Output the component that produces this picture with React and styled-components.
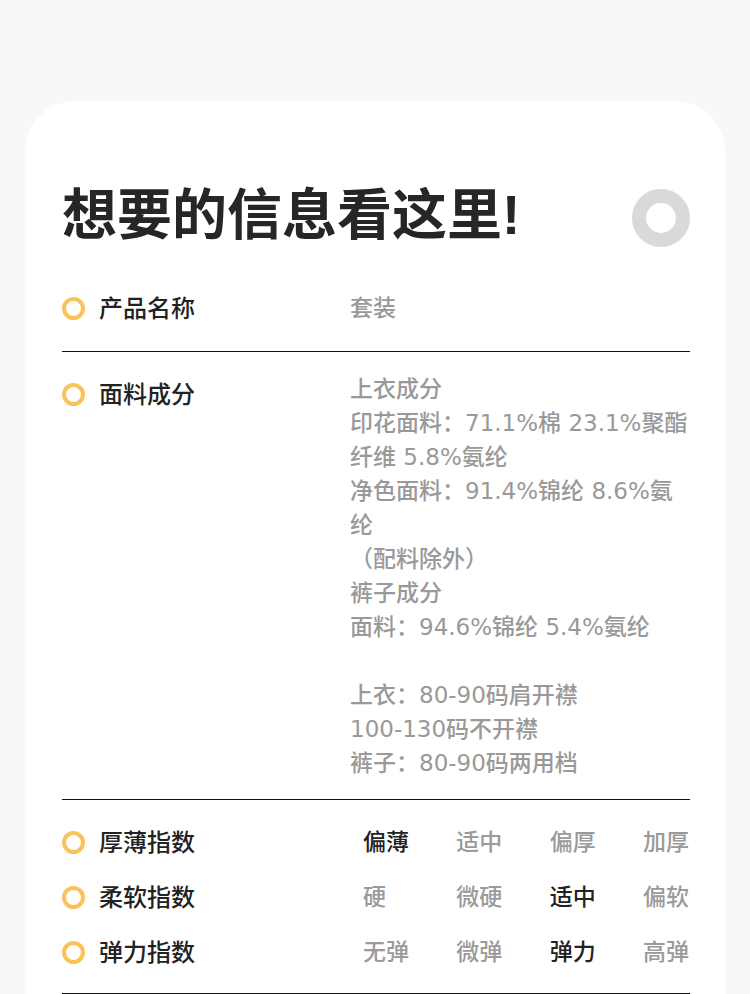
import React from 'react';
import styled, { createGlobalStyle } from 'styled-components';

const Global = createGlobalStyle`
  body {
    margin: 0;
    background: #f8f8f8;
    font-family: "Liberation Sans", "Noto Sans CJK SC", sans-serif;
  }
`

const Page = styled.div`
  padding: 101px 25px 0;
`

const Card = styled.section`
  background: #fff;
  border-radius: 50px 50px 0 0;
  padding: 80px 35px 0 37px;
  min-height: 900px;
`

const Header = styled.div`
  display: flex;
  align-items: center;
  justify-content: space-between;
  height: 74px;
  margin-bottom: 36px;
`

const Title = styled.h1`
  margin: 0 0 6px;
  font-size: 55px;
  font-weight: 700;
  color: #262626;
  line-height: 74px;
`

const Ring = styled.div`
  width: ${p => p.size}px;
  height: ${p => p.size}px;
  box-sizing: border-box;
  border-radius: 50%;
  border: ${p => p.stroke}px solid ${p => p.color};
  flex: none;
`

const Section = styled.div`
  border-bottom: 1px solid #111;
  padding: ${p => p.pad};
  display: flex;
  flex-direction: column;
  gap: 21px;
`

const Row = styled.div`
  display: grid;
  grid-template-columns: 288px 1fr;
  align-items: start;
`

const Label = styled.div`
  display: flex;
  align-items: center;
  gap: 14px;
  height: 34px;
  margin-top: ${p => p.offset || 0}px;
  font-size: 24px;
  font-weight: 500;
  color: #222;
  span {
    margin-top: -3px;
  }
`

const Value = styled.div`
  max-width: 340px;
  font-family: "DejaVu Sans", "Noto Sans CJK SC", sans-serif;
  font-size: 23px;
  line-height: 34px;
  font-weight: 500;
  color: #999;
  white-space: pre-wrap;
  word-break: break-all;
`

const Options = styled.div`
  display: flex;
  justify-content: space-between;
  margin-left: 13px;
`

const Option = styled.span`
  width: 47px;
  font-size: 23px;
  line-height: 34px;
  font-weight: 500;
  color: ${p => (p.active ? '#222' : '#9a9a9a')};
`

const fabric = `上衣成分
印花面料：71.1%棉 23.1%聚酯纤维 5.8%氨纶
净色面料：91.4%锦纶 8.6%氨纶
（配料除外）
裤子成分
面料：94.6%锦纶 5.4%氨纶

上衣：80-90码肩开襟
100-130码不开襟
裤子：80-90码两用档`

const indexes = [
  { name: '厚薄指数', opts: ['偏薄', '适中', '偏厚', '加厚'], active: 0 },
  { name: '柔软指数', opts: ['硬', '微硬', '适中', '偏软'], active: 2 },
  { name: '弹力指数', opts: ['无弹', '微弹', '弹力', '高弹'], active: 2 },
]

function Bullet() {
  return <Ring size={23} stroke={4} color="#fbc25a" />
}

function App() {
  return (
    <Page>
      <Global />
      <Card>
        <Header>
          <Title>想要的信息看这里!</Title>
          <Ring size={58} stroke={14} color="#d9d9d9" />
        </Header>

        <Section pad="0 0 26px">
          <Row>
            <Label><Bullet /><span>产品名称</span></Label>
            <Value>套装</Value>
          </Row>
        </Section>

        <Section pad="20px 0 19px">
          <Row>
            <Label offset={5}><Bullet /><span>面料成分</span></Label>
            <Value>{fabric}</Value>
          </Row>
        </Section>

        <Section pad="25px 0 24px">
          {indexes.map((item, index) => (
            <Row key={index}>
              <Label><Bullet /><span>{item.name}</span></Label>
              <Options>
                {item.opts.map((o, i) => (
                  <Option key={i} active={i === item.active}>{o}</Option>
                ))}
              </Options>
            </Row>
          ))}
        </Section>
      </Card>
    </Page>
  );
}

export default App;
